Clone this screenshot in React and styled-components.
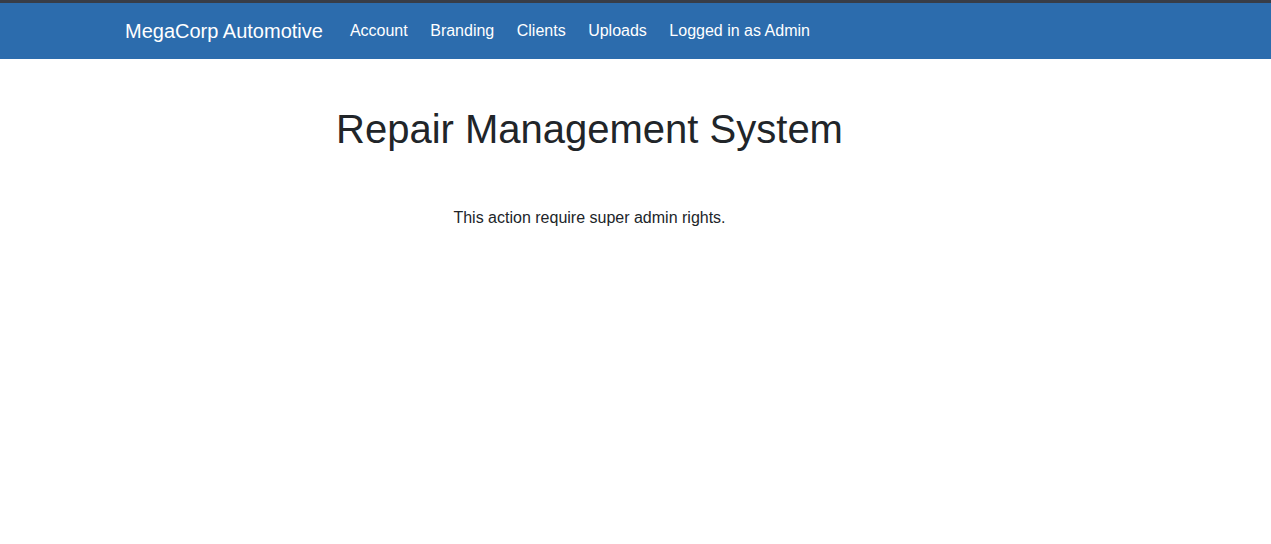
import React from "react";
import styled, { createGlobalStyle } from "styled-components";

const Global = createGlobalStyle`
  html, body { margin: 0; padding: 0; background: #fff; }
  body { font-family: "Liberation Sans", Arial, sans-serif; color: #212529; }
`;

const Navbar = styled.nav`
  border-top: 3px solid #383d47;
  background: #2c6cad;
  height: 56px;
  display: flex;
  align-items: center;
`;

const Wrap = styled.div`
  width: 929px;
  margin-left: 125px;
`;

const NavInner = styled(Wrap)`
  display: flex;
  align-items: center;
`;

const Brand = styled.a`
  font-size: 20px;
  color: #fff;
  text-decoration: none;
  margin-right: 27px;
  line-height: 1.5;
`;

const Links = styled.div`
  display: flex;
  gap: 22.5px;
`;

const NavLink = styled.a`
  font-size: 16px;
  color: #fff;
  text-decoration: none;
  line-height: 1.5;
`;

const Main = styled(Wrap)`
  text-align: center;
  padding-top: 46px;
`;

const Title = styled.h1`
  margin: 0;
  font-size: 40px;
  font-weight: 400;
  line-height: 1.2;
  color: #212529;
`;

const Message = styled.p`
  margin: 53px 0 0;
  font-size: 16px;
  line-height: 1.5;
  color: #212529;
`;

export default function App() {
  const links = ["Account", "Branding", "Clients", "Uploads", "Logged in as Admin"];
  return (
    <>
      <Global />
      <Navbar>
        <NavInner>
          <Brand href="#">MegaCorp Automotive</Brand>
          <Links>
            {links.map((l) => (
              <NavLink key={l} href="#">{l}</NavLink>
            ))}
          </Links>
        </NavInner>
      </Navbar>
      <Main>
        <Title>Repair Management System</Title>
        <Message>This action require super admin rights.</Message>
      </Main>
    </>
  );
}
